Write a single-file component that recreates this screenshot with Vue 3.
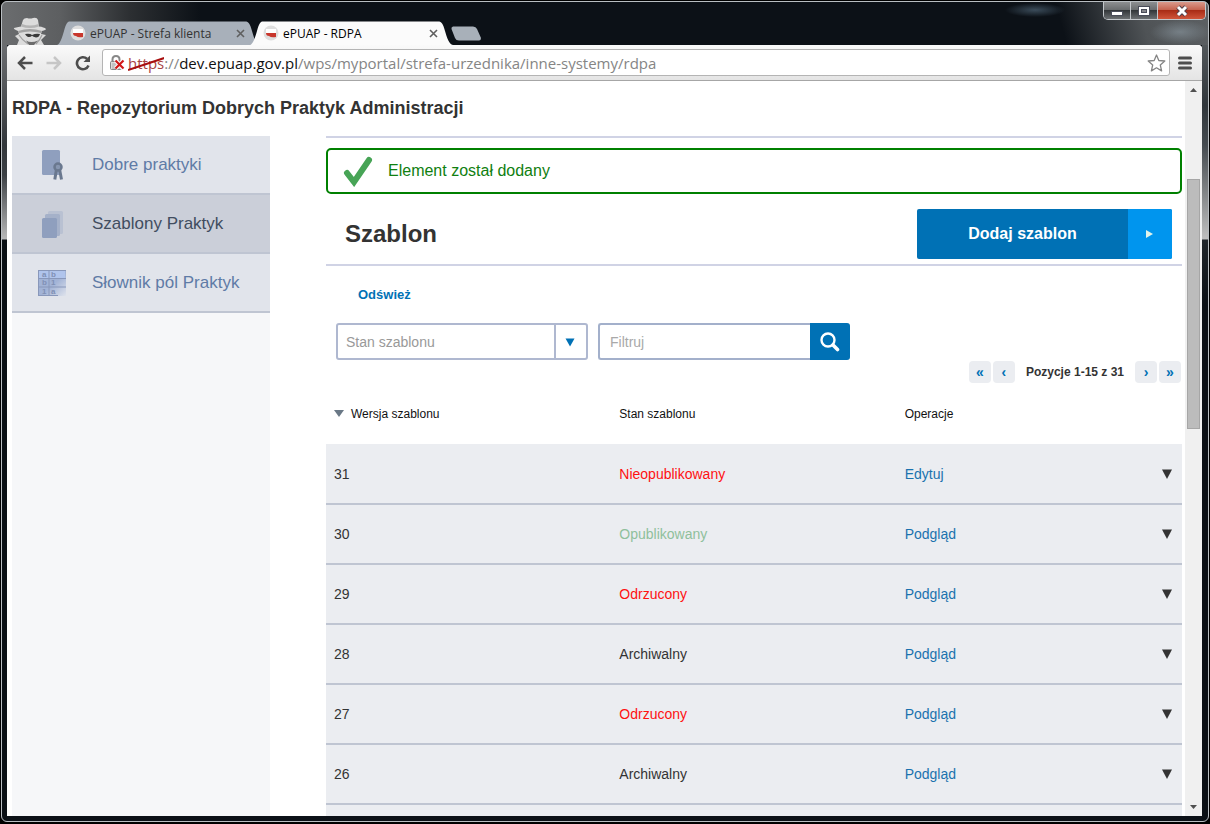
<script setup>
import { ref } from 'vue'

const menu = [
  { label: 'Dobre praktyki', icon: 'award', active: false },
  { label: 'Szablony Praktyk', icon: 'sheets', active: true },
  { label: 'Słownik pól Praktyk', icon: 'grid', active: false },
]

const rows = [
  { version: 31, state: 'Nieopublikowany', tone: 'red', action: 'Edytuj' },
  { version: 30, state: 'Opublikowany', tone: 'green', action: 'Podgląd' },
  { version: 29, state: 'Odrzucony', tone: 'red', action: 'Podgląd' },
  { version: 28, state: 'Archiwalny', tone: 'plain', action: 'Podgląd' },
  { version: 27, state: 'Odrzucony', tone: 'red', action: 'Podgląd' },
  { version: 26, state: 'Archiwalny', tone: 'plain', action: 'Podgląd' },
]

const tabs = [
  { title: 'ePUAP - Strefa klienta', active: false },
  { title: 'ePUAP - RDPA', active: true },
]

const filter = ref('')
</script>

<template>
  <div class="window">
    <header class="titlebar">
      <svg class="incognito" width="34" height="28" viewBox="0 0 34 28" aria-hidden="true">
        <path d="M4 28 L6 23 L2 19 L6 17 L5 14 Q0 12 1 11 Q4 10 8 9.500 L10 3 Q11 1 14 1 Q17 2 20 1 Q24 0 25 3 L26 9.500 Q31 10 33 12 Q33 13 29 14 L28 17 L33 18 L28 23 L31 28 Z" fill="#dcdcdc" />
        <path d="M9 7 Q17 10 25.500 7 L26 9.500 Q17 12.500 8 9.500 Z" fill="#b4b4b4" />
        <path d="M5 14 Q17 10 29 14 L28 16 Q17 13 6 16 Z" fill="#a2a2a2" />
        <path d="M12 17 Q17 16 19 18 Q23 16 27 17 Q26 20.500 23 20.500 Q20 20 19 18.800 Q17.500 20.500 15 20 Q13 19 12 17 Z" fill="#3a3a3a" />
        <path d="M6 18 Q9 23 15 27 M29 18 Q27 23 23 27" stroke="#a0a0a0" stroke-width="1.200" fill="none" />
        <path d="M13 23.500 Q18 26.500 25 23.500 L21 28 H16 Z" fill="#6c6c6c" />
      </svg>
      <nav class="tabs" aria-label="Karty">
        <div v-for="tab in tabs" :key="tab.title" class="tab" :class="{ 'tab-active': tab.active }">
          <svg class="tab-shape" viewBox="0 0 203 24" preserveAspectRatio="none" aria-hidden="true">
            <path d="M0 24 C3 23 5 17 7 10 C9 3 10 0.500 13 0.500 L188 0.500 C192 0.500 193 3 195 10 C197 17 199 23 203 24 Z" :fill="tab.active ? '#fbfbfb' : '#a8b0ba'" />
          </svg>
          <svg class="favicon" width="16" height="16" viewBox="0 0 16 16" aria-hidden="true">
            <circle cx="8" cy="8" r="7.500" fill="#dedede" />
            <rect x="3" y="4" width="10" height="4" fill="#fff" />
            <path d="M3 8 H13 V12 Q8 13 6 11 Q3 11 3 8 Z" fill="#c8372d" />
          </svg>
          <span class="tab-title">{{ tab.title }}</span>
          <button class="tab-close" :aria-label="'Zamknij ' + tab.title">
            <svg width="9" height="9" viewBox="0 0 9 9"><path d="M1 1 L8 8 M8 1 L1 8" stroke="#5f5f5f" stroke-width="1.600" /></svg>
          </button>
        </div>
        <button class="new-tab" aria-label="Nowa karta">
          <svg width="30" height="15" viewBox="0 0 30 15"><path d="M2 0.500 H22 Q25 0.500 26 3 L30 12 Q30 14.500 28 14.500 H8 Q5 14.500 4 12 L0.500 3 Q0 1 2 0.500 Z" fill="#a8b0b9" /></svg>
        </button>
      </nav>
      <div class="win-buttons">
        <button class="win-btn" aria-label="Minimalizuj">
          <svg width="12" height="12" viewBox="0 0 12 12"><rect x="0.500" y="6.500" width="11" height="4" fill="#fff" stroke="#4a4d5a" /></svg>
        </button>
        <button class="win-btn" aria-label="Maksymalizuj">
          <svg width="12" height="12" viewBox="0 0 12 12"><rect x="0.500" y="1.500" width="11" height="9" fill="#fff" stroke="#4a4d5a" /><rect x="3.500" y="4.500" width="5" height="3" fill="#85868b" stroke="#4a4d5a" /></svg>
        </button>
        <button class="win-btn win-close" aria-label="Zamknij">
          <svg width="14" height="12" viewBox="0 0 14 12"><path d="M3 2 L11 10 M11 2 L3 10" stroke="#53414a" stroke-width="5" /><path d="M3 2 L11 10 M11 2 L3 10" stroke="#fff" stroke-width="3" /></svg>
        </button>
      </div>
    </header>

    <div class="frame">
      <div class="toolbar">
        <button class="tool" aria-label="Wstecz">
          <svg width="16" height="14" viewBox="0 0 16 14"><path d="M8 1 L2 7 L8 13 M2 7 H15.500" stroke="#4d4d4d" stroke-width="2.500" fill="none" /></svg>
        </button>
        <button class="tool" aria-label="Dalej">
          <svg width="16" height="14" viewBox="0 0 16 14"><path d="M8 1 L14 7 L8 13 M14 7 H0.500" stroke="#c6c6c6" stroke-width="2.500" fill="none" /></svg>
        </button>
        <button class="tool" aria-label="Odśwież stronę">
          <svg width="16" height="16" viewBox="0 0 16 16"><path d="M13.500 10.500 A6 6 0 1 1 12 3.800" stroke="#4d4d4d" stroke-width="2.600" fill="none" /><path d="M15 0.500 V7 H8.500 Z" fill="#4d4d4d" /></svg>
        </button>
        <div class="address">
          <svg width="16" height="16" viewBox="0 0 16 16" aria-hidden="true">
            <path d="M3.500 7 V4.500 Q3.500 1 7 1 Q10.500 1 10.500 4.500 V7" fill="none" stroke="#888" stroke-width="2" />
            <rect x="1.500" y="6.500" width="11" height="8" rx="1" fill="#ddd" stroke="#888" />
            <path d="M3 9 H11 M3 11 H11 M3 13 H11" stroke="#aaa" />
            <path d="M6.500 5.500 L14.500 13.500 M14.500 5.500 L6.500 13.500" stroke="#fff" stroke-width="4" />
            <path d="M6.500 5.500 L14.500 13.500 M14.500 5.500 L6.500 13.500" stroke="#d01818" stroke-width="2.200" />
          </svg>
          <div class="url" role="textbox" aria-label="Adres"><span class="scheme">https<svg class="strike" viewBox="0 0 36 14" preserveAspectRatio="none" aria-hidden="true"><path d="M0 13 L36 1" stroke="#a80f0f" stroke-width="2" /></svg></span><span class="muted">://</span>dev.epuap.gov.pl<span class="muted">/wps/myportal/strefa-urzednika/inne-systemy/rdpa</span></div>
          <button class="star" aria-label="Dodaj do zakładek">
            <svg width="19" height="18" viewBox="0 0 19 18"><path d="M9.500 1 L11.800 6.500 L17.800 7 L13.300 11 L14.600 16.900 L9.500 13.800 L4.400 16.900 L5.700 11 L1.200 7 L7.200 6.500 Z" fill="#fff" stroke="#858585" stroke-width="1.300" stroke-linejoin="round" /></svg>
          </button>
        </div>
        <button class="tool menu-tool" aria-label="Menu">
          <svg width="14" height="14" viewBox="0 0 14 14"><path d="M1.500 2 H12.500 M1.500 7 H12.500 M1.500 12 H12.500" stroke="#4d4d4d" stroke-width="3" stroke-linecap="round" /></svg>
        </button>
      </div>

      <div class="viewport">
        <div class="page">
          <h1>RDPA - Repozytorium Dobrych Praktyk Administracji</h1>
          <div class="columns">
            <aside class="sidebar">
              <a v-for="item in menu" :key="item.label" href="#" class="side-item" :class="{ active: item.active }">
                <svg v-if="item.icon === 'award'" width="32" height="32" viewBox="0 0 32 32" aria-hidden="true">
                  <rect x="6" y="1" width="18" height="25" rx="1.500" fill="#8f9fbe" />
                  <path d="M20.500 20 L18.800 30.500 M23.500 20 L25.500 30.500" stroke="#6a788f" stroke-width="3" />
                  <circle cx="22" cy="18" r="3.500" fill="#8796b0" stroke="#6a788f" stroke-width="2.500" />
                </svg>
                <svg v-else-if="item.icon === 'sheets'" width="32" height="32" viewBox="0 0 32 32" aria-hidden="true">
                  <rect x="12" y="3" width="15" height="23" rx="1.500" fill="#b9c1d2" />
                  <rect x="9" y="6" width="15" height="22" rx="1.500" fill="#a5b1c9" />
                  <rect x="6" y="10" width="15" height="20" rx="1.500" fill="#8f9fbe" />
                </svg>
                <svg v-else width="32" height="32" viewBox="0 0 32 32" aria-hidden="true">
                  <defs>
                    <linearGradient id="fade" x1="0" y1="0" x2="1" y2="1">
                      <stop offset="0.550" stop-color="#a2b3d6" />
                      <stop offset="1" stop-color="#dfe3ec" />
                    </linearGradient>
                  </defs>
                  <rect x="2" y="3" width="28" height="26" fill="url(#fade)" />
                  <rect x="3" y="4" width="26" height="7" fill="#b0c4ec" />
                  <path d="M2 3.500 H30 M2.500 3 V29 M2 11.500 H30 M2 20 H30 M13 4 V28 M2 28.500 H22" stroke="#8897ba" fill="none" />
                  <g class="icon-text">
                    <text x="6" y="10">a</text><text x="15" y="10">b</text>
                    <text x="6" y="18">b</text><text x="15" y="18">1</text>
                    <text x="6" y="27">1</text><text x="15" y="27">a</text>
                  </g>
                </svg>
                <span>{{ item.label }}</span>
              </a>
            </aside>

            <main class="main">
              <div class="alert" role="status">
                <svg width="32" height="32" viewBox="0 0 32 32" aria-hidden="true"><path d="M5 18 L12 27 L27 5" fill="none" stroke="#47a456" stroke-width="6" stroke-linecap="round" /></svg>
                <span>Element został dodany</span>
              </div>

              <div class="heading">
                <h2>Szablon</h2>
                <button class="add">
                  <span class="add-label">Dodaj szablon</span>
                  <span class="add-arrow"><svg width="8" height="8" viewBox="0 0 8 8"><path d="M0 0 L7 4 L0 8 Z" fill="#e0f3ea" /></svg></span>
                </button>
              </div>

              <a class="refresh" href="#">Odśwież</a>

              <div class="filters">
                <div class="select-box">
                  <select aria-label="Stan szablonu"><option>Stan szablonu</option></select>
                  <span class="select-arrow"><svg width="10" height="9" viewBox="0 0 10 9"><path d="M0.500 0.500 H9.500 L5 8.500 Z" fill="#0071b5" /></svg></span>
                </div>
                <div class="search">
                  <input v-model="filter" type="text" placeholder="Filtruj" aria-label="Filtruj" />
                  <button aria-label="Szukaj">
                    <svg width="20" height="20" viewBox="0 0 20 20"><circle cx="8" cy="8" r="6.500" fill="none" stroke="#fff" stroke-width="2.400" /><path d="M13 13 L17.500 17.500" stroke="#fff" stroke-width="3.600" stroke-linecap="round" /></svg>
                  </button>
                </div>
              </div>

              <nav class="pager" aria-label="Strony">
                <button aria-label="Pierwsza">«</button>
                <button aria-label="Poprzednia">‹</button>
                <span>Pozycje 1-15 z 31</span>
                <button aria-label="Następna">›</button>
                <button aria-label="Ostatnia">»</button>
              </nav>

              <table>
                <thead>
                  <tr>
                    <th scope="col"><svg width="10" height="7" viewBox="0 0 10 7" aria-hidden="true"><path d="M0 0 H10 L5 7 Z" fill="#6a7886" /></svg>Wersja szablonu</th>
                    <th scope="col">Stan szablonu</th>
                    <th scope="col">Operacje</th>
                  </tr>
                </thead>
                <tbody>
                  <tr v-for="row in rows" :key="row.version">
                    <td>{{ row.version }}</td>
                    <td :class="row.tone">{{ row.state }}</td>
                    <td>
                      <div class="ops">
                        <a href="#">{{ row.action }}</a>
                        <button aria-label="Rozwiń"><svg width="10" height="10" viewBox="0 0 10 10"><path d="M0 0.500 H10 L5 10 Z" fill="#333" /></svg></button>
                      </div>
                    </td>
                  </tr>
                </tbody>
              </table>
              <div class="more"></div>
            </main>
          </div>
        </div>
        <div class="scrollbar" aria-hidden="true">
          <svg width="7" height="4" viewBox="0 0 7 4"><path d="M0 4 L3.500 0 L7 4 Z" fill="#505050" /></svg>
          <div class="track"><div class="thumb"></div></div>
          <svg width="7" height="4" viewBox="0 0 7 4"><path d="M0 0 L3.500 4 L7 0 Z" fill="#505050" /></svg>
        </div>
      </div>
    </div>
  </div>
</template>

<style>
body {
  background: #000;
}
</style>

<style scoped>
* {
  box-sizing: border-box;
}
button {
  border: 0;
  padding: 0;
  background: none;
  font-family: inherit;
  display: flex;
  align-items: center;
  justify-content: center;
}
a {
  text-decoration: none;
}
.window {
  position: relative;
  display: flex;
  flex-direction: column;
  height: 100vh;
  overflow: hidden;
  background:
    radial-gradient(closest-side, rgba(90, 115, 135, 0.6), transparent) calc(100% - 145px) 3px / 60px 14px no-repeat,
    radial-gradient(closest-side, rgba(150, 165, 175, 0.5), transparent) 100% 20px / 60px 24px no-repeat,
    linear-gradient(90deg, #6b6d6f 0, #5d5f61 60px, #2c2f32 130px, transparent 200px) 0 0 / 100% 45px no-repeat,
    linear-gradient(255deg, #5d6164 0, #4f5356 70px, transparent 150px) 0 0 / 100% 45px no-repeat,
    linear-gradient(180deg, #6a6c6f 0, #33373b 100px, #3c4044 130px, #b8b8b8 194px, #0a0f14 195px) 0 45px / 7px 100% no-repeat,
    linear-gradient(180deg, #53585b 0, #30363b 60px, #454b50 100px, #85888a 150px, #bfbfbf 194px, #20262b 195px, #0a0f14 260px) 100% 45px / 8px 100% no-repeat,
    #0c1117;
  font-family: "Liberation Sans", Arial, sans-serif;
  color: #333;
}
.window::after {
  content: "";
  position: absolute;
  inset: 1px 1px 2px;
  border: 1px solid #b9bec2;
  border-radius: 6px;
  box-shadow: 0 0 0 4px #000;
  pointer-events: none;
}
.titlebar {
  display: flex;
  align-items: flex-end;
  height: 45px;
  flex: none;
  padding: 0 4px 0 13px;
}
.incognito {
  flex: none;
}
.tabs {
  display: flex;
  align-items: flex-end;
  margin-left: 10px;
  font-family: "Open Sans", "Noto Sans", sans-serif;
}
.tab {
  position: relative;
  display: flex;
  align-items: center;
  width: 203px;
  height: 24px;
  padding: 0 15px 0 13px;
  font-size: 12px;
  color: #333;
}
.tab-active {
  margin-left: -10px;
  color: #000;
}
.tab-shape {
  position: absolute;
  inset: 0;
  width: 100%;
  height: 100%;
}
.favicon {
  position: relative;
}
.tab-title {
  position: relative;
  flex: 1;
  margin-left: 4px;
  white-space: nowrap;
}
.tab-close {
  position: relative;
}
.new-tab {
  margin: 0 0 4px -2px;
}
.win-buttons {
  display: flex;
  align-self: flex-start;
  margin: 2px 0 0 auto;
  border: 1px solid #c3c7cb;
  border-top: 0;
  border-radius: 0 0 5px 5px;
  overflow: hidden;
}
.win-btn {
  width: 27px;
  height: 17px;
  background: linear-gradient(#8d8f91 0, #6a6d6f 45%, #33373a 50%, #6b6f72 100%);
  border-right: 1px solid #c3c7cb;
}
.win-close {
  width: 47px;
  border-right: 0;
  background: linear-gradient(#d99a8c 0, #c56450 45%, #a92c16 50%, #d0553a 100%);
}
.frame {
  flex: 1;
  min-height: 0;
  display: flex;
  flex-direction: column;
  margin: 0 8px 8px 7px;
  border-radius: 4px 4px 0 0;
  overflow: hidden;
  background: #fff;
}
.toolbar {
  display: flex;
  align-items: center;
  flex: none;
  height: 36px;
  padding: 0 9px 0 10px;
  background: linear-gradient(#fafafa, #e4e4e4);
  border-bottom: 1px solid #a6a6a6;
}
.tool {
  width: 16px;
  height: 20px;
  margin-right: 13px;
  flex: none;
}
.address {
  display: flex;
  align-items: center;
  flex: 1;
  height: 27px;
  margin-left: -2px;
  padding: 0 3px 0 6px;
  background: #fff;
  border: 1px solid #b4b4b4;
  border-radius: 3px;
}
.url {
  flex: 1;
  margin-left: 3px;
  font: 15px "Open Sans", "Noto Sans", sans-serif;
  white-space: nowrap;
  color: #111;
}
.scheme {
  position: relative;
  color: #a84444;
}
.strike {
  position: absolute;
  left: 0;
  top: 4px;
  width: 100%;
  height: 14px;
}
.muted {
  color: #858585;
}
.menu-tool {
  margin: 0 0 0 7px;
}
.viewport {
  flex: 1;
  min-height: 0;
  display: flex;
}
.page {
  flex: 1;
  display: flex;
  flex-direction: column;
  padding: 0 3px 0 5px;
  overflow: hidden;
}
h1 {
  margin: 17px 0;
  font-size: 18px;
  line-height: 21px;
}
.columns {
  flex: 1;
  min-height: 0;
  display: flex;
  gap: 56px;
}
.sidebar {
  width: 258px;
  flex: none;
  background: #f6f7f9;
}
.side-item {
  display: flex;
  align-items: center;
  gap: 24px;
  height: 59px;
  padding-left: 24px;
  background: #e1e4eb;
  border-bottom: 2px solid #bfc5d2;
  font-size: 17px;
  color: #5f7ba6;
}
.side-item.active {
  background: #cbcfd9;
  color: #414d60;
}
.icon-text {
  font: bold 8px "Liberation Sans", sans-serif;
  fill: #8090b5;
}
.main {
  flex: 1;
  display: flex;
  flex-direction: column;
  border-top: 2px solid #d0d3e5;
}
.alert {
  display: flex;
  align-items: center;
  gap: 14px;
  height: 46px;
  flex: none;
  margin-top: 10px;
  padding: 0 14px;
  border: 2px solid #008000;
  border-radius: 5px;
  font-size: 16px;
  color: #108010;
}
.heading {
  display: flex;
  align-items: center;
  justify-content: space-between;
  flex: none;
  height: 72px;
  padding: 10px 10px 0 19px;
  border-bottom: 2px solid #d0d3e5;
}
h2 {
  margin: 0;
  font-size: 24px;
}
.add {
  width: 255px;
  height: 50px;
  align-items: stretch;
  border-radius: 2px;
  overflow: hidden;
  background: #0071b5;
  color: #fff;
  font-size: 16px;
  font-weight: bold;
}
.add-label {
  flex: 1;
  align-self: center;
}
.add-arrow {
  width: 44px;
  display: flex;
  align-items: center;
  justify-content: center;
  background: #0095ee;
}
.refresh {
  align-self: flex-start;
  margin: 20px 0 0 32px;
  font-size: 13px;
  line-height: 17px;
  font-weight: bold;
  color: #0071b5;
}
.filters {
  display: flex;
  gap: 10px;
  margin: 20px 0 0 10px;
}
.select-box {
  display: grid;
  width: 252px;
  height: 37px;
}
.select-box > * {
  grid-area: 1 / 1;
}
select {
  appearance: none;
  padding: 0 40px 0 8px;
  border: 2px solid #afb8d0;
  border-radius: 3px;
  background: #fff;
  font: 14px "Liberation Sans", Arial, sans-serif;
  color: #999;
}
.select-arrow {
  justify-self: end;
  width: 34px;
  display: flex;
  align-items: center;
  justify-content: center;
  padding: 2px 4px 0 0;
  border-left: 2px solid #afb8d0;
  pointer-events: none;
}
.search {
  display: flex;
  width: 252px;
  height: 37px;
}
.search input {
  flex: 1;
  min-width: 0;
  padding: 0 10px;
  border: 2px solid #a3b0cb;
  border-right: 0;
  border-radius: 3px 0 0 3px;
  font: 14px "Liberation Sans", Arial, sans-serif;
}
.search input::placeholder {
  color: #a9a9a9;
}
.search button {
  width: 40px;
  border-radius: 0 3px 3px 0;
  background: #0071b5;
}
.pager {
  display: flex;
  align-items: center;
  justify-content: flex-end;
  gap: 2px;
  margin: 1px 1px 0 0;
  font-size: 12px;
  font-weight: bold;
}
.pager button {
  width: 22px;
  height: 22px;
  border-radius: 4px;
  background: #ebedf1;
  color: #0071b5;
  font-size: 14px;
  font-weight: bold;
}
.pager span {
  margin: 0 9px;
}
table {
  width: 100%;
  table-layout: fixed;
  border-spacing: 0;
}
th {
  height: 61px;
  padding: 0 8px;
  font-size: 12px;
  font-weight: normal;
  text-align: left;
  color: #111;
}
th svg {
  margin-right: 7px;
  vertical-align: 1px;
}
td {
  height: 60px;
  padding: 0 8px;
  background: #ebedf1;
  border-bottom: 2px solid #bfc5d2;
  font-size: 14px;
}
tbody tr:first-child td {
  height: 61px;
}
.red {
  color: #f11;
}
.green {
  color: #8fc09c;
}
.ops {
  display: flex;
  align-items: center;
  justify-content: space-between;
  padding-right: 2px;
}
.ops a {
  color: #1a72ae;
}
.more {
  flex: 1;
  background: #ebedf1;
}
.scrollbar {
  width: 17px;
  flex: none;
  display: flex;
  flex-direction: column;
  align-items: center;
  padding: 7px 0;
  background: #f0f0f0;
}
.track {
  flex: 1;
  width: 13px;
  padding-top: 87px;
}
.thumb {
  height: 40%;
  border: 1px solid #a6a6a6;
  background: #bcbcbc;
}
</style>
